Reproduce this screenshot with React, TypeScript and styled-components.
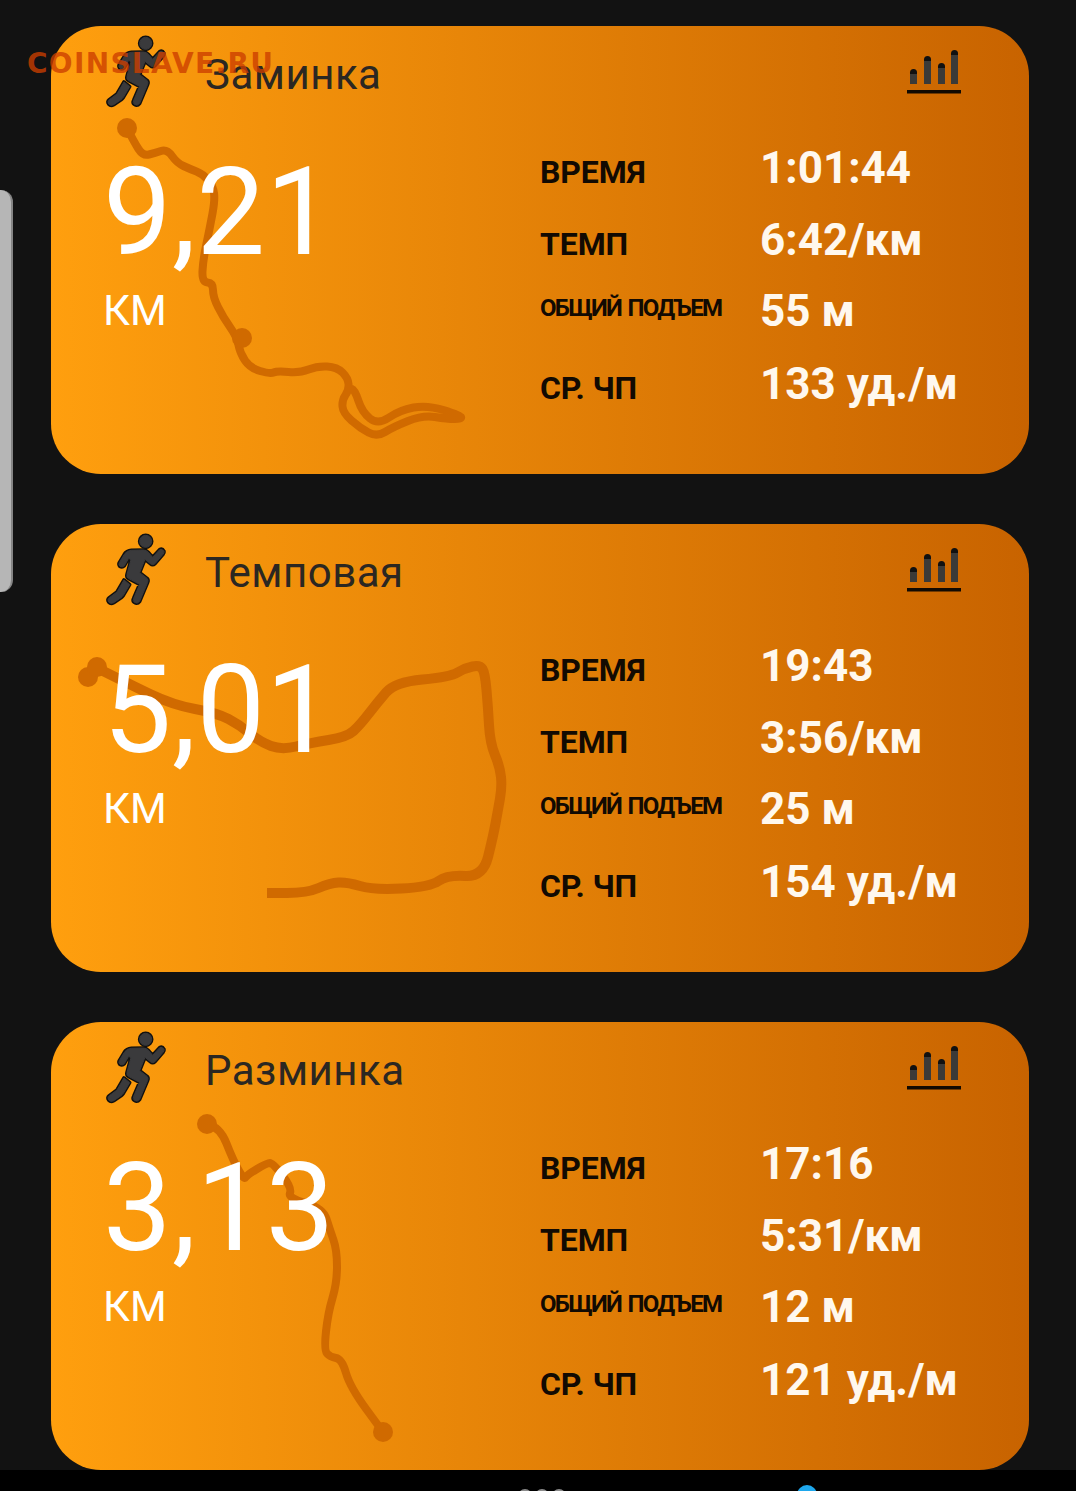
import React from "react";
import styled, { createGlobalStyle } from "styled-components";

const GlobalStyle = createGlobalStyle`
  html, body {
    margin: 0;
    padding: 0;
    background-color: #121212;
    font-family: "Roboto", "Liberation Sans", sans-serif;
  }
`;

const Page = styled.div`
  position: relative;
  width: 1076px;
  height: 1491px;
  overflow: hidden;
  display: flex;
  flex-direction: column;
  background-color: #121212;
`;

const CardList = styled.main`
  display: flex;
  flex-direction: column;
  gap: 50px;
  padding: 26px 47px 0 51px;
`;

const Card = styled.section`
  position: relative;
  height: 448px;
  border-radius: 50px;
  background: linear-gradient(90deg, #ff9f0e 0%, #c86300 100%);
  overflow: hidden;
`;

const RouteLayer = styled.svg`
  position: absolute;
  inset: 0;
  width: 100%;
  height: 100%;
`;

const CardContent = styled.div`
  position: relative;
  display: flex;
  flex-direction: column;
`;

const CardHeader = styled.header`
  display: flex;
  align-items: flex-start;
  height: 81px;
  padding: 11px 68px 0 56px;
  box-sizing: border-box;
`;

const Title = styled.h2`
  flex: 1;
  margin: 17px 0 0 40px;
  font-size: 42px;
  line-height: 42px;
  font-weight: 400;
  letter-spacing: 0.5px;
  color: #2b2722;
`;

const RunnerSvg = styled.svg`
  overflow: visible;
`;

const ChartIcon = styled.svg`
  margin-top: 13px;
`;

const CardBody = styled.div`
  display: flex;
`;

const Distance = styled.div`
  width: 489px;
  padding-left: 52px;
  box-sizing: border-box;
  color: #ffffff;
`;

const DistanceValue = styled.div`
  margin-top: 45px;
  font-size: 122px;
  line-height: 122px;
  font-weight: 400;
  letter-spacing: 0.5px;
`;

const DistanceUnit = styled.div`
  margin-top: 12px;
  font-size: 42px;
  line-height: 50px;
`;

const Stats = styled.dl`
  display: grid;
  grid-template-columns: 220px auto;
  grid-template-rows: 72px 71px 73px 60px;
  align-items: baseline;
  margin: 39px 0 0;
`;

const StatLabel = styled.dt<{ $small?: boolean }>`
  margin: 0;
  font-size: ${({ $small }) => ($small ? "24px" : "32px")};
  line-height: ${({ $small }) => ($small ? "26px" : "44px")};
  letter-spacing: ${({ $small }) => ($small ? "-1.7px" : "-0.1px")};
  word-spacing: ${({ $small }) => ($small ? "2px" : "0")};
  font-weight: 700;
  color: #120a02;
  align-self: ${({ $small }) => ($small ? "start" : "baseline")};
  margin-top: ${({ $small }) => ($small ? "6px" : "0")};
`;

const StatValue = styled.dd`
  margin: 0;
  font-size: 44px;
  line-height: 44px;
  font-weight: 700;
  color: #fff8ee;
  white-space: nowrap;
`;

const Watermark = styled.div`
  position: absolute;
  left: 27px;
  top: 48px;
  font-family: "DejaVu Sans", sans-serif;
  font-size: 28px;
  line-height: 32px;
  font-weight: 700;
  letter-spacing: 1.3px;
  color: rgba(204, 62, 0, 0.8);
`;

const ScrollHandle = styled.div`
  position: absolute;
  left: 0;
  top: 190px;
  width: 11px;
  height: 402px;
  background-color: #b6b6b6;
  border-right: 2px solid #858585;
  border-radius: 0 12px 12px 0;
`;

const BottomBar = styled.footer`
  display: flex;
  align-items: flex-start;
  height: 21px;
  background-color: #000000;
  overflow: hidden;
  padding-left: 518px;
  box-sizing: border-box;
`;

const NavDot = styled.span`
  width: 14px;
  height: 14px;
  margin: 19px 3px 0 0;
  border: 2px solid #8c8c8c;
  border-radius: 50%;
  box-sizing: border-box;
`;

const ActiveDot = styled.span`
  width: 20px;
  height: 20px;
  margin: 15px 0 0 228px;
  border-radius: 50%;
  background-color: #1ea7ec;
`;

const ROUTE_COLOR = "#d06a00";

type Point = [number, number];

type RouteData = {
  originY: number;
  width: number;
  dots: Point[];
  points: Point[];
};

type Run = {
  title: string;
  distance: string;
  time: string;
  pace: string;
  ascent: string;
  heartRate: string;
  route: RouteData;
};

const runs: Run[] = [
  {
    title: "Заминка",
    distance: "9,21",
    time: "1:01:44",
    pace: "6:42/км",
    ascent: "55 м",
    heartRate: "133 уд./м",
    route: {
      originY: 26,
      width: 8,
      dots: [
        [127, 128],
        [242, 338],
      ],
      points: [
        [127, 128], [134, 142], [143, 156], [155, 153], [167, 149], [177, 163], [190, 169], [203, 174],
        [213, 186], [215, 200], [210, 227], [203, 260], [202, 282], [213, 283], [213, 297], [223, 317],
        [237, 337], [240, 353], [250, 368], [270, 374], [277, 371], [300, 373], [317, 366], [337, 367],
        [348, 378], [349, 390], [342, 400], [343, 413], [360, 428], [377, 437], [393, 427], [423, 415],
        [447, 419], [462, 419], [460, 415], [427, 405], [400, 410], [378, 425], [362, 412], [355, 390],
        [349, 388],
      ],
    },
  },
  {
    title: "Темповая",
    distance: "5,01",
    time: "19:43",
    pace: "3:56/км",
    ascent: "25 м",
    heartRate: "154 уд./м",
    route: {
      originY: 524,
      width: 10,
      dots: [
        [88, 677],
        [97, 667],
      ],
      points: [
        [97, 668], [127, 683], [173, 705], [217, 713], [240, 725], [260, 742], [282, 750], [310, 743],
        [347, 737], [360, 725], [377, 703], [395, 682], [450, 677], [465, 668], [480, 665], [485, 673],
        [488, 707], [490, 743], [500, 767], [502, 787], [498, 810], [493, 837], [483, 877], [447, 875],
        [430, 887], [373, 890], [347, 882], [330, 883], [307, 893], [267, 893],
      ],
    },
  },
  {
    title: "Разминка",
    distance: "3,13",
    time: "17:16",
    pace: "5:31/км",
    ascent: "12 м",
    heartRate: "121 уд./м",
    route: {
      originY: 1022,
      width: 8,
      dots: [
        [207, 1124],
        [383, 1432],
      ],
      points: [
        [207, 1124], [220, 1127], [233, 1160], [244, 1180], [247, 1175], [267, 1163], [273, 1163],
        [292, 1188], [288, 1198], [323, 1208], [330, 1230], [337, 1250], [337, 1283], [328, 1313],
        [324, 1350], [330, 1357], [342, 1359], [350, 1387], [383, 1432],
      ],
    },
  },
];

// smooth the traced points: straight to the midpoints, curving through each point
const toSmoothPath = (points: Point[]) => {
  let d = `M${points[0][0]} ${points[0][1]}`;
  for (let i = 1; i < points.length - 1; i++) {
    const midX = (points[i][0] + points[i + 1][0]) / 2;
    const midY = (points[i][1] + points[i + 1][1]) / 2;
    d += ` Q${points[i][0]} ${points[i][1]} ${midX} ${midY}`;
  }
  const last = points[points.length - 1];
  return `${d} L${last[0]} ${last[1]}`;
};

const runnerShapes = (
  <>
    <circle cx="170" cy="49" r="18" />
    <path d="M91 113 L106 88 Q113 77 127 76 L163 75 Q172 75 178 82 L191 97 L212 74 Q220 70 225 79 Q226 84 222 88 L198 116 Q191 122 184 116 L168 103 L152 143 L174 160 Q179 165 176 172 L152 229 Q145 238 136 232 Q130 227 134 220 L152 178 L118 160 Q112 156 114 148 L126 104 L119 100 L106 122 Q100 128 93 124 Q88 119 91 113 Z" />
    <path d="M105 165 L122 179 L103 211 Q100 215 96 218 L74 233 Q65 238 59 231 Q54 224 61 218 L84 201 Z" />
  </>
);

const RunnerIcon: React.FC = () => (
  <RunnerSvg width="58" height="70" viewBox="54 30 174 210">
    <g fill="#111111" stroke="#111111" strokeWidth="11" strokeLinejoin="round">
      {runnerShapes}
    </g>
    <g fill="#3a3a3c" stroke="#3a3a3c" strokeWidth="3" strokeLinejoin="round">
      {runnerShapes}
    </g>
  </RunnerSvg>
);

const barData = [
  { x: 3, top: 19 },
  { x: 17, top: 6 },
  { x: 31, top: 13 },
  { x: 44, top: 0 },
];

const StatsChart: React.FC = () => (
  <ChartIcon width="54" height="46" viewBox="0 0 54 46">
    {barData.map((bar) => (
      <g key={bar.x}>
        <rect x={bar.x} y={bar.top} width="7" height={34 - bar.top} rx="3.5" fill="#111111" />
        <rect x={bar.x} y={bar.top + 5} width="7" height={34 - bar.top - 5} fill="#3b3a38" />
      </g>
    ))}
    <rect x="0" y="40" width="54" height="3.5" fill="#120a02" />
  </ChartIcon>
);

const RouteTrace: React.FC<{ route: RouteData }> = ({ route }) => (
  <RouteLayer viewBox={`51 ${route.originY} 978 448`}>
    <path
      d={toSmoothPath(route.points)}
      fill="none"
      stroke={ROUTE_COLOR}
      strokeWidth={route.width}
      strokeLinejoin="round"
      strokeLinecap="butt"
    />
    {route.dots.map(([cx, cy]) => (
      <circle key={`${cx}-${cy}`} cx={cx} cy={cy} r="10" fill={ROUTE_COLOR} />
    ))}
  </RouteLayer>
);

const RunCard: React.FC<{ run: Run }> = ({ run }) => (
  <Card>
    <RouteTrace route={run.route} />
    <CardContent>
      <CardHeader>
        <RunnerIcon />
        <Title>{run.title}</Title>
        <StatsChart />
      </CardHeader>
      <CardBody>
        <Distance>
          <DistanceValue>{run.distance}</DistanceValue>
          <DistanceUnit>КМ</DistanceUnit>
        </Distance>
        <Stats>
          <StatLabel>ВРЕМЯ</StatLabel>
          <StatValue>{run.time}</StatValue>
          <StatLabel>ТЕМП</StatLabel>
          <StatValue>{run.pace}</StatValue>
          <StatLabel $small>ОБЩИЙ ПОДЪЕМ</StatLabel>
          <StatValue>{run.ascent}</StatValue>
          <StatLabel>СР. ЧП</StatLabel>
          <StatValue>{run.heartRate}</StatValue>
        </Stats>
      </CardBody>
    </CardContent>
  </Card>
);

const App: React.FC = () => (
  <Page>
    <GlobalStyle />
    <CardList>
      {runs.map((run) => (
        <RunCard key={run.title} run={run} />
      ))}
    </CardList>
    <BottomBar>
      <NavDot />
      <NavDot />
      <NavDot />
      <ActiveDot />
    </BottomBar>
    <ScrollHandle />
    <Watermark>COINSLAVE.RU</Watermark>
  </Page>
);

export default App;
